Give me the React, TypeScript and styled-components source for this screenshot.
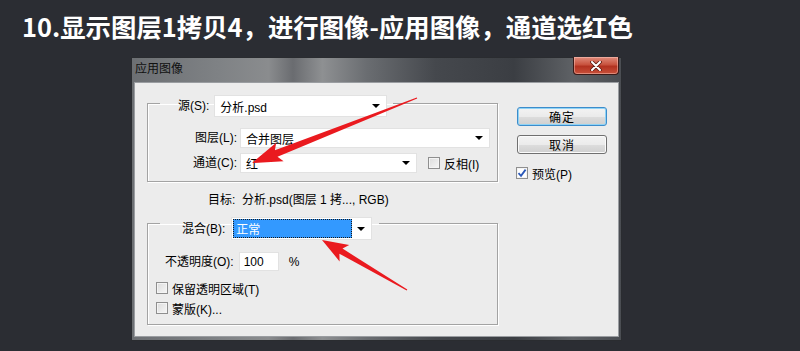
import React from "react";
import styled, { createGlobalStyle } from "styled-components";

const GlobalStyle = createGlobalStyle`
  html, body { margin: 0; padding: 0; background: #2b2d33; }
  body { width: 800px; height: 351px; overflow: hidden; }
`;

const Page = styled.div`
  position: relative;
  width: 800px;
  height: 351px;
  background: #2b2d33;
  overflow: hidden;
`;

const Heading = styled.h1`
  margin: 0;
  padding: 11px 0 0 22px;
  height: 30px;
  line-height: 30px;
  font-family: "Noto Sans CJK SC", sans-serif;
  font-weight: 700;
  font-size: 25.4px;
  color: #ffffff;
  white-space: nowrap;
`;

const Window = styled.div`
  box-sizing: border-box;
  margin: 16px 0 0 131px;
  width: 491px;
  height: 284px;
  display: flex;
  flex-direction: column;
  padding: 0 3px 4px;
  background: linear-gradient(
    90deg,
    #6c6f73 0%,
    #7f8285 18%,
    #8a8c8e 28%,
    #6a6c70 33%,
    #8e9092 39%,
    #6a6d71 48%,
    #45484d 62%,
    #3b3e43 78%,
    #5e6165 90%,
    #4a4d52 100%
  );
  box-shadow: inset 0 0 0 1px #2a2c30;
  font-family: "Liberation Sans", "Noto Sans CJK SC", sans-serif;
  font-size: 12px;
  color: #000;
`;

const TitleBar = styled.div`
  height: 25px;
  display: flex;
  align-items: flex-start;
  justify-content: space-between;
`;

const Title = styled.span`
  padding: 5px 0 0 1px;
  line-height: 14px;
  font-size: 12px;
  color: #101010;
`;

const CloseButton = styled.div`
  box-sizing: border-box;
  width: 46px;
  height: 18px;
  display: flex;
  align-items: center;
  justify-content: center;
  border: 1px solid #3a1a18;
  border-top: none;
  border-radius: 0 0 4px 4px;
  background: linear-gradient(180deg, #e08c7c 0%, #c8523e 45%, #b23220 55%, #c8503a 100%);
  box-shadow: inset 0 0 0 1px rgba(255, 210, 200, 0.45);
`;

const Body = styled.div`
  box-sizing: border-box;
  flex: 1;
  display: flex;
  gap: 19px;
  padding: 6px 0 0 12px;
  background: #ececec;
  border: 1px solid #9a9da1;
`;

const LeftColumn = styled.div`
  width: 351px;
  display: flex;
  flex-direction: column;
`;

const Group = styled.fieldset<{ $pb: number }>`
  box-sizing: border-box;
  width: 351px;
  margin: 0;
  padding: 0 0 ${(p) => p.$pb}px 0;
  border: 1px solid #a3a3a3;
  box-shadow: inset 1px 1px 0 #ffffff, 1px 1px 0 #ffffff;
  min-width: 0;
`;

const Legend = styled.legend<{ $pt: number; $pl: number; $pr: number }>`
  margin-left: 12px;
  padding: ${(p) => p.$pt}px ${(p) => p.$pr}px 0 ${(p) => p.$pl}px;
`;

const LegendRow = styled.div<{ $gap: number }>`
  display: flex;
  align-items: center;
  gap: ${(p) => p.$gap}px;
`;

const Label = styled.span`
  white-space: nowrap;
  line-height: 14px;
`;

const Select = styled.div<{ $w: number; $h: number }>`
  box-sizing: border-box;
  width: ${(p) => p.$w}px;
  height: ${(p) => p.$h}px;
  display: flex;
  align-items: center;
  justify-content: space-between;
  padding: 0 6px 0 5px;
  background: #ffffff;
  border: 1px solid #e2e2e2;
  white-space: nowrap;
`;

const Arrow = styled.span`
  width: 0;
  height: 0;
  border-left: 4px solid transparent;
  border-right: 4px solid transparent;
  border-top: 4px solid #000;
`;

const SelectedValue = styled.span`
  box-sizing: border-box;
  width: 119px;
  height: 19px;
  margin-left: -4px;
  display: flex;
  align-items: center;
  padding-left: 3px;
  background: #3399ff;
  color: #fff;
  outline: 1px dotted #1a1a1a;
  outline-offset: -1px;
`;

const FieldGrid = styled.div`
  margin-top: 11px;
  display: grid;
  grid-template-columns: 89px auto;
  grid-auto-rows: 20px;
  row-gap: 5px;
  column-gap: 3px;
  align-items: center;
`;

const GridLabel = styled(Label)`
  text-align: right;
`;

const Inline = styled.div`
  display: flex;
  align-items: center;
`;

const CheckBox = styled.span<{ $checked?: boolean }>`
  box-sizing: border-box;
  width: 12px;
  height: 12px;
  flex: none;
  display: inline-flex;
  align-items: center;
  justify-content: center;
  border: 1px solid #8f8f8f;
  background: ${(p) =>
    p.$checked ? "#ffffff" : "linear-gradient(135deg, #dcdcdc 0%, #f6f6f6 100%)"};
  box-shadow: inset 0 0 0 1px #f4f4f4;
`;

const CheckLabel = styled.label<{ $ml: number }>`
  display: flex;
  align-items: center;
  gap: 4px;
  margin-left: ${(p) => p.$ml}px;
  white-space: nowrap;
`;

const TargetLine = styled.div`
  margin-top: 11px;
  padding-left: 61px;
  height: 14px;
  line-height: 14px;
  white-space: nowrap;
`;

const OpacityRow = styled.div`
  margin-top: 12px;
  padding-left: 17px;
  height: 19px;
  display: flex;
  align-items: center;
  gap: 5px;
`;

const TextInput = styled.div`
  box-sizing: border-box;
  width: 40px;
  height: 19px;
  padding-left: 4px;
  display: flex;
  align-items: center;
  background: #fff;
  border: 1px solid #e2e2e2;
`;

const Percent = styled.span`
  margin-left: 5px;
`;

const CheckRows = styled.div`
  margin-top: 7px;
  padding-left: 8px;
  display: flex;
  flex-direction: column;
`;

const CheckRow = styled.div`
  height: 20px;
  display: flex;
  align-items: center;
`;

const RightColumn = styled.div`
  width: 90px;
  margin-top: 18px;
  display: flex;
  flex-direction: column;
  gap: 9px;
`;

const Button = styled.div<{ $default?: boolean }>`
  box-sizing: border-box;
  height: 19px;
  display: flex;
  align-items: center;
  justify-content: center;
  border: 1px solid ${(p) => (p.$default ? "#3c8ccb" : "#707070")};
  border-radius: 3px;
  background: linear-gradient(180deg, #f3f3f3 0%, #ebebeb 50%, #dddddd 51%, #cfcfcf 100%);
  box-shadow: ${(p) =>
    p.$default ? "inset 0 0 0 1px #8fd3f5" : "inset 0 0 0 1px #fbfbfb"};
  letter-spacing: 1px;
`;

const PreviewRow = styled(CheckLabel)`
  margin-top: 1px;
  height: 18px;
`;

const Overlay = styled.svg`
  position: absolute;
  left: 0;
  top: 0;
  pointer-events: none;
`;

function arrowPoints(
  tail: [number, number],
  tip: [number, number],
  headLen: number,
  headHalf: number,
  shaftHalf: number,
  tailHalf: number
): string {
  const dx = tip[0] - tail[0];
  const dy = tip[1] - tail[1];
  const len = Math.hypot(dx, dy);
  const ux = dx / len;
  const uy = dy / len;
  const nx = -uy;
  const ny = ux;
  const bx = tip[0] - ux * headLen;
  const by = tip[1] - uy * headLen;
  const pts: [number, number][] = [
    [tail[0] + nx * tailHalf, tail[1] + ny * tailHalf],
    [bx + ux * 4 + nx * shaftHalf, by + uy * 4 + ny * shaftHalf],
    [bx + nx * headHalf, by + ny * headHalf],
    [tip[0], tip[1]],
    [bx - nx * headHalf, by - ny * headHalf],
    [bx + ux * 4 - nx * shaftHalf, by + uy * 4 - ny * shaftHalf],
    [tail[0] - nx * tailHalf, tail[1] - ny * tailHalf],
  ];
  return pts.map((p) => `${p[0].toFixed(1)},${p[1].toFixed(1)}`).join(" ");
}

const CheckMark = () => (
  <svg width="10" height="10" viewBox="0 0 10 10">
    <path d="M1.5 5.2 L4 7.8 L8.6 1.6" fill="none" stroke="#2a58b8" strokeWidth="1.8" />
  </svg>
);

export default function App() {
  return (
    <Page>
      <GlobalStyle />
      <Heading>10.显示图层1拷贝4，进行图像-应用图像，通道选红色</Heading>
      <Window>
        <TitleBar>
          <Title>应用图像</Title>
          <CloseButton>
            <svg width="12" height="10" viewBox="0 0 12 10">
              <path d="M2 1 L10 9 M10 1 L2 9" stroke="#5a1a12" strokeWidth="3.6" strokeLinecap="round" />
              <path d="M2 1 L10 9 M10 1 L2 9" stroke="#ffffff" strokeWidth="2" strokeLinecap="round" />
            </svg>
          </CloseButton>
        </TitleBar>
        <Body>
          <LeftColumn>
            <Group $pb={8}>
              <Legend $pt={6} $pl={18} $pr={6}>
                <LegendRow $gap={5}>
                  <Label>源(S):</Label>
                  <Select $w={173} $h={22}>
                    <span>分析.psd</span>
                    <Arrow />
                  </Select>
                </LegendRow>
              </Legend>
              <FieldGrid>
                <GridLabel>图层(L):</GridLabel>
                <Select $w={250} $h={20}>
                  <span>合并图层</span>
                  <Arrow />
                </Select>
                <GridLabel>通道(C):</GridLabel>
                <Inline>
                  <Select $w={177} $h={20}>
                    <span>红</span>
                    <Arrow />
                  </Select>
                  <CheckLabel $ml={11}>
                    <CheckBox />
                    <span>反相(I)</span>
                  </CheckLabel>
                </Inline>
              </FieldGrid>
            </Group>
            <TargetLine>目标:&nbsp; 分析.psd(图层 1 拷..., RGB)</TargetLine>
            <Group $pb={6}>
              <Legend $pt={10} $pl={22} $pr={7}>
                <LegendRow $gap={6}>
                  <Label>混合(B):</Label>
                  <Select $w={141} $h={23}>
                    <SelectedValue>正常</SelectedValue>
                    <Arrow />
                  </Select>
                </LegendRow>
              </Legend>
              <OpacityRow>
                <Label>不透明度(O):</Label>
                <TextInput>100</TextInput>
                <Percent>%</Percent>
              </OpacityRow>
              <CheckRows>
                <CheckRow>
                  <CheckLabel $ml={0}>
                    <CheckBox />
                    <span>保留透明区域(T)</span>
                  </CheckLabel>
                </CheckRow>
                <CheckRow>
                  <CheckLabel $ml={0}>
                    <CheckBox />
                    <span>蒙版(K)...</span>
                  </CheckLabel>
                </CheckRow>
              </CheckRows>
            </Group>
          </LeftColumn>
          <RightColumn>
            <Button $default>确定</Button>
            <Button>取消</Button>
            <PreviewRow $ml={-1}>
              <CheckBox $checked>
                <CheckMark />
              </CheckBox>
              <span>预览(P)</span>
            </PreviewRow>
          </RightColumn>
        </Body>
      </Window>
      <Overlay width="800" height="351" viewBox="0 0 800 351">
        <polygon points={arrowPoints([417, 98], [252, 163], 30, 10, 3.5, 0.5)} fill="#ea1a1f" />
        <polygon points={arrowPoints([407, 290], [322, 240], 26, 9.5, 3, 0.5)} fill="#ea1a1f" />
      </Overlay>
    </Page>
  );
}
